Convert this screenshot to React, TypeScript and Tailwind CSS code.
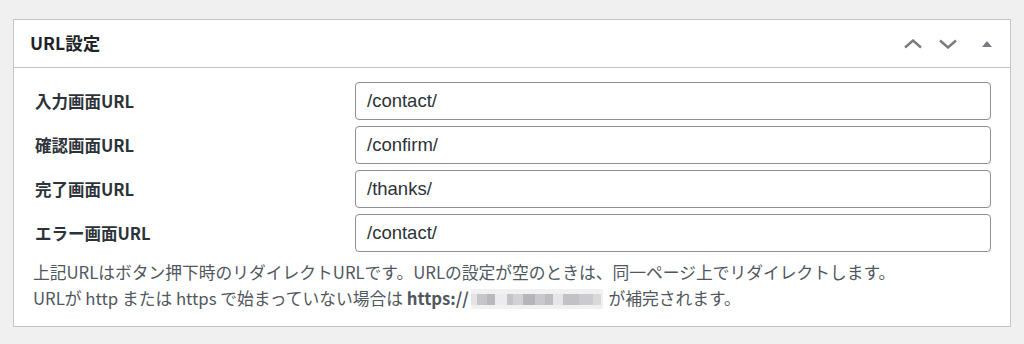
import React from 'react';

const rows = [
  { label: '入力画面URL', value: '/contact/' },
  { label: '確認画面URL', value: '/confirm/' },
  { label: '完了画面URL', value: '/thanks/' },
  { label: 'エラー画面URL', value: '/contact/' },
];

const jp = { fontFamily: '"Noto Sans CJK JP", "Noto Sans", sans-serif' };

function Blurred() {
  // pixelated, blurred host name
  const blocks = [
    { w: 6, c: 'bg-[#e4e4e6]' },
    { w: 10, c: 'bg-[#c6c6ca]' },
    { w: 8, c: 'bg-[#b8b8bd]' },
    { w: 12, c: 'bg-[#ececee]' },
    { w: 6, c: 'bg-[#c4c4c8]' },
    { w: 10, c: 'bg-[#d2d2d5]' },
    { w: 12, c: 'bg-[#b5b5ba]' },
    { w: 10, c: 'bg-[#c9c9cd]' },
    { w: 8, c: 'bg-[#bcbcc1]' },
    { w: 10, c: 'bg-[#e6e6e8]' },
    { w: 16, c: 'bg-[#c2c2c6]' },
    { w: 14, c: 'bg-[#cbcbcf]' },
    { w: 8, c: 'bg-[#d9d9dc]' },
  ];
  return (
    <span className="inline-flex items-center align-middle w-[132px] h-[20px] mx-[2px] relative -top-[1px] bg-[#f1f1f2] blur-[0.7px]">
      {blocks.map((b, i) => (
        <span key={i} className={`${b.c} h-[11px]`} style={{ width: b.w }} />
      ))}
    </span>
  );
}

export default function App() {
  return (
    <div className="bg-[#f0f0f1] h-[344px] pt-[19px] pl-[13px]" style={jp}>
      <div className="w-[998px] bg-white border border-[#c3c4c7]">
        <div className="h-[48px] flex items-center justify-between border-b border-[#c3c4c7] pl-[16px] pr-[18px]">
          <h2 className="text-[17.5px] font-bold text-[#1d2327]">URL設定</h2>
          <div className="flex items-center">
            <svg width="20" height="10" viewBox="0 0 20 10" className="mr-[15px]">
              <path d="M2 8.5 L10 1.5 L18 8.5" fill="none" stroke="#787c82" strokeWidth="2.4" />
            </svg>
            <svg width="20" height="10" viewBox="0 0 20 10" className="mr-[24px]">
              <path d="M2 1.5 L10 8.5 L18 1.5" fill="none" stroke="#787c82" strokeWidth="2.4" />
            </svg>
            <svg width="10" height="6" viewBox="0 0 10 6">
              <path d="M5 0 L10 6 L0 6 Z" fill="#787c82" />
            </svg>
          </div>
        </div>
        <div className="pt-[14px] pl-[19px] pr-[19px] pb-[15px]">
          <div className="flex flex-col gap-[6px]">
            {rows.map((r) => (
              <div key={r.label} className="flex items-center">
                <div className="w-[322px] pl-[2px] text-[16.5px] font-bold text-[#2c3338]">{r.label}</div>
                <div className="flex-1 h-[38px] border border-[#8c8f94] rounded-[4px] flex items-center px-[11px] text-[18.5px] text-[#2c3338]" style={{ fontFamily: '"Liberation Sans", "Noto Sans CJK JP", sans-serif' }}>
                  {r.value}
                </div>
              </div>
            ))}
          </div>
          <div className="mt-[7px] text-[16.75px] leading-[26px] text-[#50575e]">
            <p>上記URLはボタン押下時のリダイレクトURLです。URLの設定が空のときは、同一ページ上でリダイレクトします。</p>
            <p>
              URLが http または https で始まっていない場合は <b className="font-bold">https://</b>
              <Blurred /> が補完されます。
            </p>
          </div>
        </div>
      </div>
    </div>
  );
}
